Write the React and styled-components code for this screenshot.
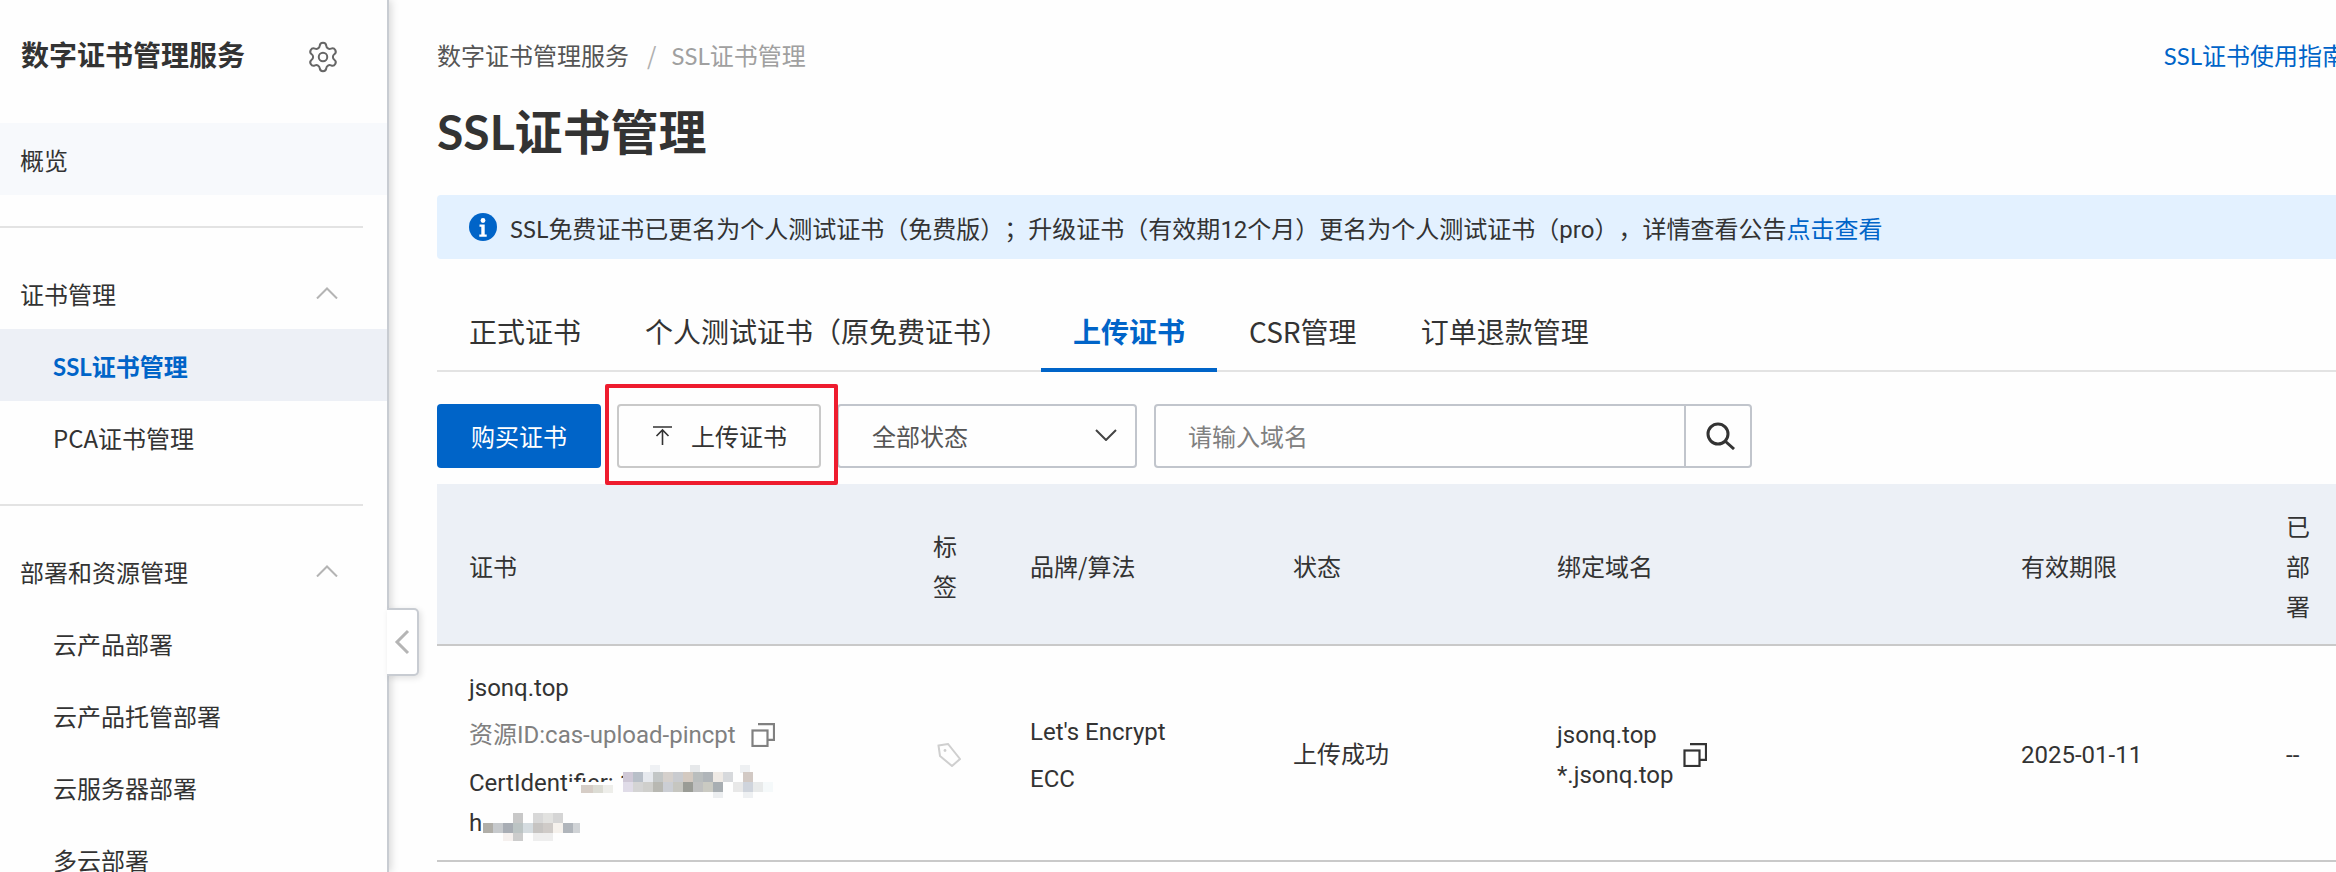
import React from "react";
import styled, { createGlobalStyle } from "styled-components";
import { Settings } from "lucide-react";

const Global = createGlobalStyle`
  html, body { margin: 0; padding: 0; height: 872px; overflow: hidden; background: #fefefe; }
  * { box-sizing: border-box; }
  body {
    font-family: "Noto Sans CJK SC", sans-serif;
    font-size: 24px;
    color: #333;
    text-spacing-trim: space-all;
  }
`;

const Page = styled.div`
  display: flex;
  width: 2336px;
  height: 872px;
  overflow: hidden;
`;

const Sidebar = styled.aside`
  position: relative;
  z-index: 2;
  flex: 0 0 389px;
  height: 872px;
  background: #fefefe;
  border-right: 2px solid #c8ccd2;
  box-shadow: 2px 0 8px rgba(0, 0, 0, 0.16);
`;

const SideHead = styled.div`
  display: flex;
  align-items: center;
  justify-content: space-between;
  height: 108px;
  margin-bottom: 15px;
  padding: 0 47px 0 21px;
  color: #666;
`;

const SideTitle = styled.div`
  font-size: 28px;
  font-weight: 700;
  color: #333;
`;

const Gear = styled(Settings)`
  margin-top: 6px;
`;

const NavItem = styled.div`
  display: flex;
  align-items: center;
  justify-content: space-between;
  height: 72px;
  padding: 0 ${(p) => (p.$group ? "49px" : "0")} 0 ${(p) => (p.$sub ? "53px" : "20px")};
  background: ${(p) => (p.$active ? "#edf0f6" : p.$soft ? "#f7f9fc" : "transparent")};
  color: ${(p) => (p.$active ? "#0064c8" : "#333")};
  font-weight: ${(p) => (p.$active ? 700 : 400)};
`;

const SideRule = styled.hr`
  width: 363px;
  height: 2px;
  margin: 31px 0 29px;
  border: 0;
  background: #e3e3e3;
`;

const CollapseHandle = styled.button`
  position: absolute;
  left: 100%;
  top: 608px;
  display: flex;
  align-items: center;
  justify-content: center;
  width: 32px;
  height: 68px;
  padding: 0;
  background: #fff;
  border: 2px solid #c8ccd2;
  border-left: 0;
  border-radius: 0 5px 5px 0;
  box-shadow: 2px 2px 6px rgba(0, 0, 0, 0.12);
`;

const Main = styled.main`
  flex: 0 0 auto;
  width: 1962px;
  padding-left: 48px;
`;

const CrumbRow = styled.div`
  display: flex;
  align-items: center;
  justify-content: space-between;
  height: 36px;
  margin-top: 36px;
`;

const Crumbs = styled.div`
  display: flex;
  align-items: center;
  color: #555;
`;

const CrumbSep = styled.span`
  margin: 0 15px 0 18px;
  color: #b0b0b0;
`;

const CrumbNow = styled.span`
  color: #a0a0a0;
`;

const GuideLink = styled.a`
  margin-right: 5px;
  color: #0064c8;
`;

const PageTitle = styled.h1`
  height: 52px;
  margin: 31px 0 40px;
  font-size: 48px;
  line-height: 52px;
  font-weight: 700;
  color: #333;
`;

const Banner = styled.div`
  display: flex;
  align-items: center;
  gap: 13px;
  height: 64px;
  padding-left: 32px;
  background: #e3f1ff;
  border-radius: 4px;
  color: #333;
`;

const BannerLink = styled.a`
  color: #0064c8;
`;

const Latin = styled.span`
  font-family: Roboto, sans-serif;
`;

const Caps = styled.span`
  font-family: Lato, sans-serif;
`;

const TabBar = styled.div`
  display: flex;
  margin-top: 32px;
  border-bottom: 2px solid #e3e3e3;
`;

const Tab = styled.div`
  height: 81px;
  margin-bottom: -2px;
  padding: 0 32px;
  font-size: 28px;
  line-height: 80px;
  font-weight: ${(p) => (p.$active ? 700 : 400)};
  color: ${(p) => (p.$active ? "#0064c8" : "#333")};
  border-bottom: 4px solid ${(p) => (p.$active ? "#0064c8" : "transparent")};
`;

const Toolbar = styled.div`
  position: relative;
  display: flex;
  gap: 16px;
  height: 64px;
  margin-top: 32px;
`;

const PrimaryButton = styled.button`
  width: 164px;
  padding: 0 0 2px;
  background: #0064c8;
  border: 0;
  border-radius: 4px;
  color: #fff;
  font: inherit;
`;

const UploadButton = styled.button`
  display: flex;
  align-items: center;
  gap: 19px;
  width: 204px;
  padding: 0 0 2px 34px;
  background: #fefefe;
  border: 2px solid #c9c9c9;
  border-radius: 4px;
  color: #333;
  font: inherit;
`;

const Highlight = styled.div`
  position: absolute;
  left: 168px;
  top: -20px;
  width: 233px;
  height: 101px;
  border: 4px solid #ee1c2e;
  border-radius: 2px;
  pointer-events: none;
`;

const Select = styled.div`
  display: flex;
  align-items: center;
  justify-content: space-between;
  width: 300px;
  padding: 0 18px 2px 33px;
  border: 2px solid #c1c5cc;
  border-radius: 4px;
  color: #555;
`;

const SearchBox = styled.div`
  display: flex;
  width: 598px;
  margin-left: 1px;
  border: 2px solid #c1c5cc;
  border-radius: 4px;
`;

const SearchInput = styled.input`
  flex: 1;
  min-width: 0;
  padding: 0 0 2px 32px;
  background: transparent;
  border: 0;
  outline: 0;
  color: #333;
  font: inherit;
  &::placeholder { color: #808080; opacity: 1; }
`;

const SearchButton = styled.button`
  display: flex;
  align-items: center;
  justify-content: center;
  flex: 0 0 66px;
  padding: 0 0 0 5px;
  background: transparent;
  border: 0;
  border-left: 2px solid #c1c5cc;
`;

const Table = styled.div`
  margin-top: 16px;
`;

const Row = styled.div`
  display: grid;
  grid-template-columns: 464px 97px 263px 264px 464px 265px 97px;
  height: ${(p) => (p.$head ? "162px" : "216px")};
  background: ${(p) => (p.$head ? "#ecf0f6" : "transparent")};
  border-bottom: 2px solid #c9c9c9;
  font-family: ${(p) => (p.$head ? "inherit" : 'Roboto, "Noto Sans CJK SC", sans-serif')};
`;

const Cell = styled.div`
  display: flex;
  flex-direction: column;
  justify-content: center;
  padding: 4px 32px 0;
  line-height: 40px;
`;

const RowCell = styled(Cell)`
  flex-direction: row;
  align-items: center;
  justify-content: flex-start;
`;

const Stack = styled.div`
  display: flex;
  flex-direction: column;
  gap: ${(p) => p.$gap || 0}px;
`;

const CertName = styled.div`
  white-space: nowrap;
`;

const ResourceId = styled.div`
  display: flex;
  align-items: center;
  gap: 15px;
  margin-top: 7px;
  color: #808080;
  white-space: nowrap;
`;

const CertLines = styled.div`
  position: relative;
  margin-top: 8px;
  white-space: nowrap;
`;

const Mosaic = styled.svg`
  position: absolute;
  left: 0;
  top: 0;
  overflow: visible;
`;

const TagMark = styled.svg`
  display: block;
  margin-left: 4px;
`;

const CopyMark = styled.svg`
  flex: 0 0 24px;
  margin-left: ${(p) => p.$offset || 0}px;
`;

/* Blurred pixel block over the identifier, in cells of 10px */
const cells = [
  // [x, y, w, h, colour] relative to the CertIdentifier block
  [181, 2, 10, 8, "#eff1f4"], [221, 2, 10, 8, "#e6e8ea"], [271, 2, 10, 8, "#eef0f2"],
  [154, 9, 10, 10, "#cfc8d6"], [164, 9, 10, 10, "#b8bfc8"], [174, 9, 10, 10, "#e6e9ee"],
  [184, 9, 10, 10, "#c2c6c6"], [194, 9, 10, 10, "#d5d0cc"], [204, 9, 10, 10, "#c9cbcf"],
  [214, 9, 10, 10, "#d3c9c0"], [224, 9, 10, 10, "#b9bdbd"], [234, 9, 10, 10, "#b0b5b9"],
  [244, 9, 10, 10, "#efeae5"], [254, 9, 10, 10, "#d7d9dc"], [274, 9, 10, 10, "#d2c9c4"],
  [100, 19, 54, 14, "#fefefe"], [112, 22, 12, 8, "#d6cdc6"], [124, 22, 10, 8, "#dcdcd4"], [134, 22, 10, 8, "#eeeeea"],
  [154, 19, 10, 10, "#e0dce8"], [164, 19, 10, 10, "#d4d4d4"], [174, 19, 10, 10, "#cfcfcc"],
  [184, 19, 10, 10, "#b8b8b2"], [194, 19, 10, 10, "#cbced4"], [204, 19, 10, 10, "#c6c6c0"],
  [214, 19, 10, 10, "#9a9c96"], [224, 19, 10, 10, "#bfc0c0"], [234, 19, 10, 10, "#cacac2"],
  [244, 19, 10, 10, "#a8aeb2"], [264, 19, 10, 10, "#e8e8e8"], [274, 19, 10, 10, "#cfd4dc"],
  [284, 19, 10, 10, "#e8eaea"], [294, 19, 10, 10, "#f5f9fa"],
  [244, 29, 10, 6, "#eceef0"], [274, 29, 10, 6, "#eef0f2"],
  [44, 50, 10, 10, "#c8c8c8"], [64, 50, 10, 10, "#d8d8d8"], [74, 50, 10, 10, "#e2e2e0"], [84, 50, 10, 10, "#d5d5d5"],
  [14, 60, 10, 10, "#b0aea8"], [24, 60, 10, 10, "#c6c9cc"], [34, 60, 10, 10, "#a8adb4"],
  [44, 60, 10, 10, "#bcc4c4"], [54, 60, 10, 10, "#d5dce0"], [64, 60, 10, 10, "#c6c4c2"],
  [74, 60, 10, 10, "#cfcbc8"], [84, 60, 10, 10, "#f5f1ec"], [94, 60, 10, 10, "#b0b5bb"], [104, 60, 7, 10, "#d0d3d6"],
  [34, 70, 10, 8, "#f5f0ee"], [44, 70, 10, 8, "#cccccc"], [64, 70, 10, 8, "#eeeeee"], [74, 70, 10, 8, "#eeeeee"],
];

const ChevronUp = () => (
  <svg width="22" height="12" viewBox="0 0 22 12" fill="none" stroke="#b4b4b4" strokeWidth="2">
    <path d="M1 11.5 11 1.5l10 10" />
  </svg>
);

const CopyIcon = ({ color, offset }) => (
  <CopyMark $offset={offset} width="24" height="24" viewBox="0 0 24 24" fill="none" stroke={color} strokeWidth="2.2">
    <rect x="1.5" y="7.5" width="15" height="15.5" />
    <path d="M7 1.2h16v15.6h-6" />
  </CopyMark>
);

export default function App() {
  return (
    <Page>
      <Global />
      <Sidebar>
        <SideHead>
          <SideTitle>数字证书管理服务</SideTitle>
          <Gear size={34} strokeWidth={1.4} />
        </SideHead>
        <NavItem $soft>概览</NavItem>
        <SideRule />
        <NavItem $group>证书管理<ChevronUp /></NavItem>
        <NavItem $sub $active><span><Caps>SSL</Caps>证书管理</span></NavItem>
        <NavItem $sub>PCA证书管理</NavItem>
        <SideRule />
        <NavItem $group>部署和资源管理<ChevronUp /></NavItem>
        <NavItem $sub>云产品部署</NavItem>
        <NavItem $sub>云产品托管部署</NavItem>
        <NavItem $sub>云服务器部署</NavItem>
        <NavItem $sub>多云部署</NavItem>
        <CollapseHandle aria-label="收起">
          <svg width="16" height="26" viewBox="0 0 16 26" fill="none" stroke="#b5b5b5" strokeWidth="3">
            <path d="M14 2 3 13l11 11" />
          </svg>
        </CollapseHandle>
      </Sidebar>
      <Main>
        <CrumbRow>
          <Crumbs>
            数字证书管理服务
            <CrumbSep>/</CrumbSep>
            <CrumbNow><Caps>SSL</Caps>证书管理</CrumbNow>
          </Crumbs>
          <GuideLink><Caps>SSL</Caps>证书使用指南</GuideLink>
        </CrumbRow>
        <PageTitle><Caps>SSL</Caps>证书管理</PageTitle>
        <Banner>
          <svg width="28" height="28" viewBox="0 0 28 28">
            <circle cx="14" cy="14" r="14" fill="#0064c8" />
            <circle cx="14" cy="7.5" r="2.4" fill="#fff" />
            <path d="M10.5 11.5h5.2v10h2v2.2h-7.4v-2.2h2v-7.8h-1.8z" fill="#fff" />
          </svg>
          <span>
            <Caps>SSL</Caps>免费证书已更名为个人测试证书（免费版）；升级证书（有效期<Latin>12</Latin>个月）更名为个人测试证书（<Latin>pro</Latin>），详情查看公告
            <BannerLink>点击查看</BannerLink>
          </span>
        </Banner>
        <TabBar>
          <Tab>正式证书</Tab>
          <Tab>个人测试证书（原免费证书）</Tab>
          <Tab $active>上传证书</Tab>
          <Tab>CSR管理</Tab>
          <Tab>订单退款管理</Tab>
        </TabBar>
        <Toolbar>
          <PrimaryButton>购买证书</PrimaryButton>
          <UploadButton>
            <svg width="19" height="19" viewBox="0 0 19 19" fill="none" stroke="#333" strokeWidth="1.6">
              <path d="M0 1h19M9.5 19V4M3.5 10l6-6 6 6" />
            </svg>
            上传证书
          </UploadButton>
          <Select>
            全部状态
            <svg width="22" height="12" viewBox="0 0 22 12" fill="none" stroke="#444" strokeWidth="2">
              <path d="M1 1l10 10L21 1" />
            </svg>
          </Select>
          <SearchBox>
            <SearchInput placeholder="请输入域名" />
            <SearchButton aria-label="搜索">
              <svg width="30" height="28" viewBox="0 0 30 28" fill="none" stroke="#333" strokeWidth="3">
                <circle cx="12" cy="12" r="10" />
                <path d="M19 19l9 8" />
              </svg>
            </SearchButton>
          </SearchBox>
          <Highlight />
        </Toolbar>
        <Table>
          <Row $head>
            <Cell>证书</Cell>
            <Cell>标签</Cell>
            <Cell>品牌/算法</Cell>
            <Cell>状态</Cell>
            <Cell>绑定域名</Cell>
            <Cell>有效期限</Cell>
            <Cell>已部署</Cell>
          </Row>
          <Row>
            <Cell>
              <CertName>jsonq.top</CertName>
              <ResourceId>
                资源ID:cas-upload-pincpt
                <CopyIcon color="#808080" />
              </ResourceId>
              <CertLines>
                CertIdentifier: 1
                <br />
                h
                <Mosaic width="310" height="80" aria-hidden="true">
                  {cells.map(([x, y, w, h, c], i) => (
                    <rect key={i} x={x} y={y} width={w} height={h} fill={c} />
                  ))}
                </Mosaic>
              </CertLines>
            </Cell>
            <Cell>
              <TagMark width="24" height="24" viewBox="0 0 24 24" fill="none" stroke="#cfcfcf" strokeWidth="2">
                <path d="M1.5 2.5 11 1l12 15-8 7-12-10z" />
                <circle cx="8" cy="7.5" r="1.4" fill="#cfcfcf" stroke="none" />
              </TagMark>
            </Cell>
            <Cell>
              <Stack $gap={7}>
                <div>Let's Encrypt</div>
                <div>ECC</div>
              </Stack>
            </Cell>
            <Cell>上传成功</Cell>
            <RowCell>
              <Stack>
                <div>jsonq.top</div>
                <div>*.jsonq.top</div>
              </Stack>
              <CopyIcon color="#333" offset={10} />
            </RowCell>
            <Cell>2025-01-11</Cell>
            <Cell>--</Cell>
          </Row>
        </Table>
      </Main>
    </Page>
  );
}
